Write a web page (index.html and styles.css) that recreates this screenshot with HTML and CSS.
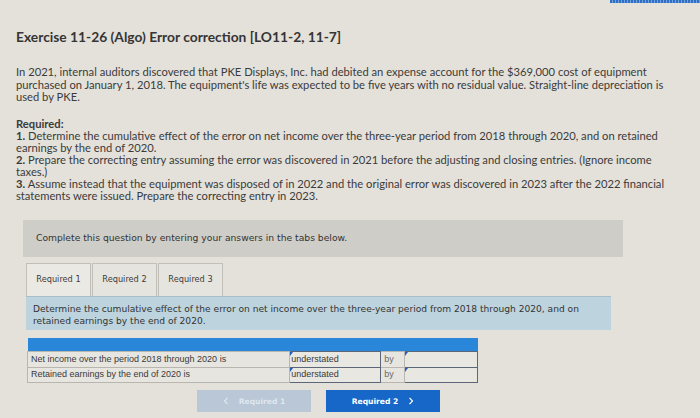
FILE: index.html
```html
<!DOCTYPE html>
<html>
<head>
<meta charset="utf-8">
<link rel="stylesheet" href="styles.css">
</head>
<body>
<div class="topline"></div>
<div class="page">
  <h1 class="title">Exercise 11-26 (Algo) Error correction [LO11-2, 11-7]</h1>
  <p class="intro">In 2021, internal auditors discovered that PKE Displays, Inc. had debited an expense account for the $369,000 cost of equipment purchased on January 1, 2018. The equipment's life was expected to be five years with no residual value. Straight-line depreciation is used by PKE.</p>
  <div class="required">
    <div class="req-head">Required:</div>
    <div class="item">1. Determine the cumulative effect of the error on net income over the three-year period from 2018 through 2020, and on retained earnings by the end of 2020.</div>
    <div class="item">2. Prepare the correcting entry assuming the error was discovered in 2021 before the adjusting and closing entries. (Ignore income taxes.)</div>
    <div class="item">3. Assume instead that the equipment was disposed of in 2022 and the original error was discovered in 2023 after the 2022 financial statements were issued. Prepare the correcting entry in 2023.</div>
  </div>
  <div class="notice">Complete this question by entering your answers in the tabs below.</div>
  <div class="work">
    <div class="tabs">
      <div class="tab active">Required 1</div>
      <div class="tab">Required 2</div>
      <div class="tab">Required 3</div>
    </div>
    <div class="instr">Determine the cumulative effect of the error on net income over the three-year period from 2018 through 2020, and on retained earnings by the end of 2020.</div>
    <table class="answers">
      <tr class="hdr"><td colspan="4"></td></tr>
      <tr>
        <td class="lbl">Net income over the period 2018 through 2020 is</td>
        <td class="sel"><span class="mark"></span>understated</td>
        <td class="by">by</td>
        <td class="inp"><span class="mark"></span></td>
      </tr>
      <tr>
        <td class="lbl">Retained earnings by the end of 2020 is</td>
        <td class="sel"><span class="mark"></span>understated</td>
        <td class="by">by</td>
        <td class="inp"><span class="mark"></span></td>
      </tr>
    </table>
    <div class="nav">
      <div class="btn prev"><svg width="6" height="8" viewBox="0 0 6 8"><polyline points="4.5,0.8 1.5,4 4.5,7.2" fill="none" stroke="currentColor" stroke-width="1.2"/></svg><span>Required 1</span></div>
      <div class="btn next"><span>Required 2</span><svg width="6" height="8" viewBox="0 0 6 8"><polyline points="1.5,0.8 4.5,4 1.5,7.2" fill="none" stroke="currentColor" stroke-width="1.2"/></svg></div>
    </div>
  </div>
</div>
</body>
</html>
```

FILE: styles.css
```css
html, body {
  margin: 0;
  padding: 0;
}
body {
  width: 700px;
  height: 418px;
  overflow: hidden;
  background: #e4e1da;
  position: relative;
  color: #3b3b3b;
}
.topline {
  position: absolute;
  top: 0;
  left: 610px;
  width: 90px;
  height: 3px;
  background: repeating-linear-gradient(90deg, #2f6fc4 0 2px, #6f9fdc 2px 3px);
}
.page {
  padding: 29px 0 0 16px;
}
.title {
  margin: 0;
  font-family: Lato, "Liberation Sans", sans-serif;
  font-weight: 700;
  font-size: 13.8px;
  line-height: 16px;
  color: #353535;
}
.intro {
  margin: 21px 0 0 0;
  width: 655px;
  font-family: Lato, "Liberation Sans", sans-serif;
  font-size: 11.2px;
  line-height: 12.5px;
}
.required {
  margin-top: 14px;
  width: 655px;
  font-family: Lato, "Liberation Sans", sans-serif;
  font-size: 11.2px;
  line-height: 12px;
}
.req-head {
  font-weight: 700;
}
.item::first-letter {
  font-weight: 700;
}
.notice {
  margin: 18px 0 0 7px;
  width: 600px;
  height: 37px;
  box-sizing: border-box;
  padding: 12px 0 0 13px;
  background: #cfcdc7;
  font-family: "DejaVu Sans", Verdana, sans-serif;
  font-size: 9.2px;
  line-height: 11px;
  color: #333;
}
.work {
  margin: 6px 0 0 10px;
}
.tabs {
  display: flex;
  gap: 1px;
}
.tab {
  width: 65px;
  height: 33px;
  box-sizing: border-box;
  border: 1px solid #c2bfb8;
  border-bottom: none;
  background: #e6e4de;
  font-family: "DejaVu Sans", Verdana, sans-serif;
  font-size: 8.2px;
  line-height: 31px;
  text-align: center;
  color: #3c3c3c;
}
.tab.active {
  background: #ebe9e4;
}
.instr {
  width: 585px;
  height: 34px;
  box-sizing: border-box;
  padding: 6px 0 0 7px;
  background: #bdd4de;
  border-top: 1px solid #a7bfca;
  font-family: "DejaVu Sans", Verdana, sans-serif;
  font-size: 9.1px;
  line-height: 12px;
  color: #333;
}
.answers {
  margin: 8px 0 0 1px;
  border-collapse: collapse;
  width: 451px;
  font-family: "Liberation Sans", Arial, sans-serif;
  font-size: 9px;
  color: #3a3a3a;
}
.answers td {
  padding: 0 0 0 3px;
  height: 15.5px;
  line-height: 13px;
  box-sizing: border-box;
}
.hdr td {
  background: #2a86d8;
  height: 14px;
  padding: 0;
}
.lbl {
  width: 263px;
  border: 1px solid #b9b6b0;
  background: #e7e5df;
}
.sel {
  width: 91px;
  border: 1px solid #5b6678;
  background: #e9e7e2;
  position: relative;
  padding-left: 1px !important;
}
.by {
  width: 24px;
  border: 1px solid #b9b6b0;
  background: #e7e5df;
  color: #6a6a6a;
}
.inp {
  width: 73px;
  border: 1px solid #5b6678;
  background: #e9e7e2;
  position: relative;
}
.mark {
  position: absolute;
  top: 0;
  left: 0;
  width: 0;
  height: 0;
  border-top: 4px solid #1e5fb8;
  border-right: 3px solid transparent;
}
.nav {
  display: flex;
  gap: 15px;
  margin: 7px 0 0 171px;
}
.btn {
  width: 114px;
  height: 22px;
  display: flex;
  align-items: center;
  justify-content: center;
  gap: 10px;
  font-family: "DejaVu Sans", Verdana, sans-serif;
  font-weight: 700;
  font-size: 7.6px;
}
.btn svg {
  display: block;
}
.prev {
  background: #b9c7d6;
  color: #dfe6ee;
}
.next {
  background: #1667c7;
  color: #ffffff;
}
```
